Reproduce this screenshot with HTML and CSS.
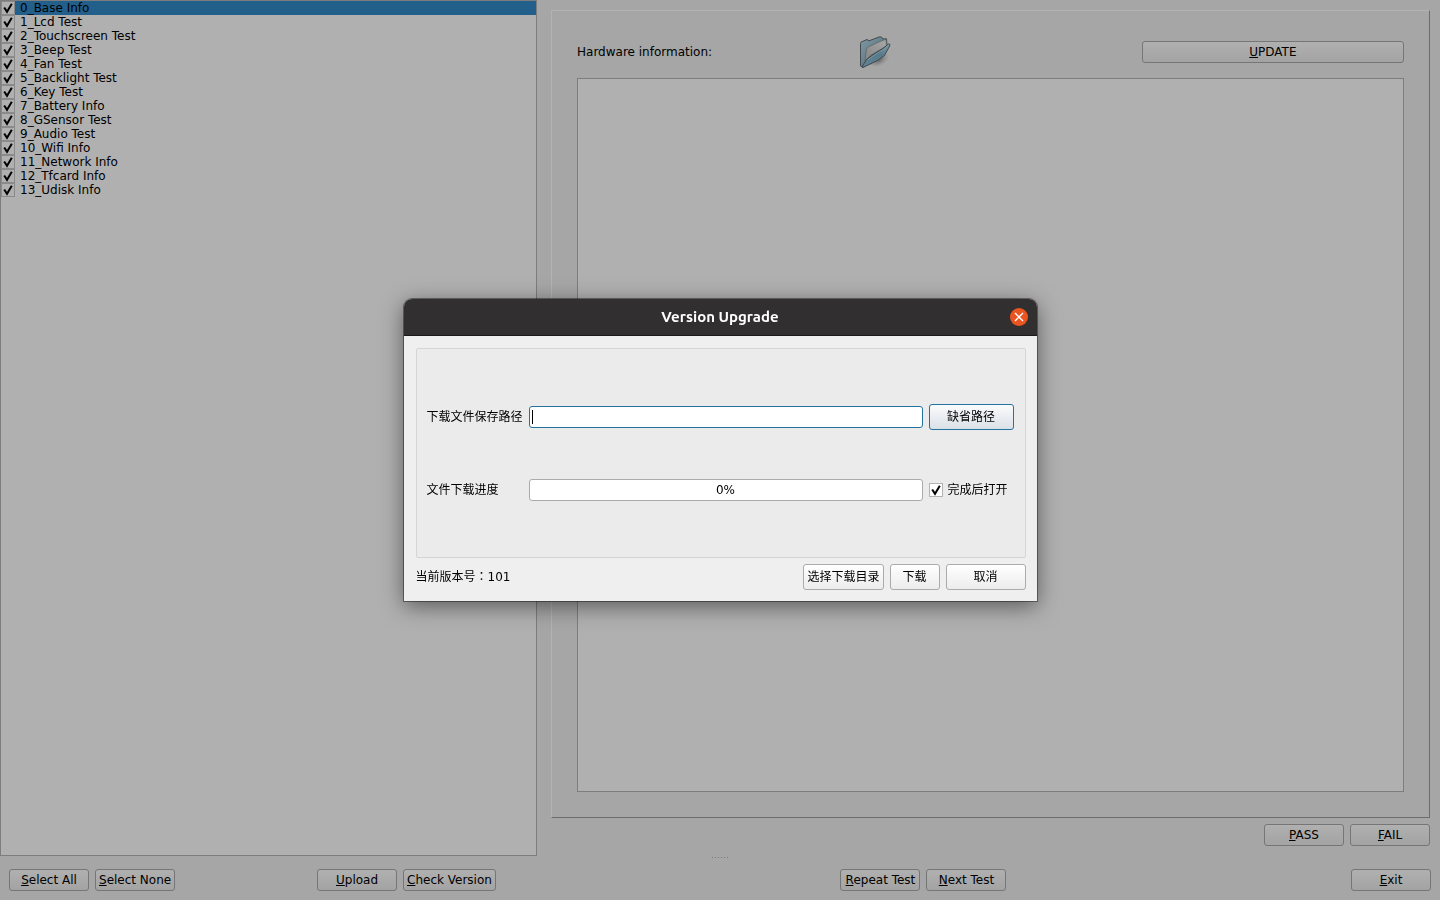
FILE: index.html
```html
<!DOCTYPE html>
<html lang="zh-CN">
<head>
<meta charset="utf-8">
<title>Version Upgrade</title>
<link rel="stylesheet" href="styles.css">
</head>
<body>
<div class="window">
  <main class="workspace">
    <ul class="tests">
      <li class="test selected"><label><input type="checkbox" checked><span>0_Base Info</span></label></li>
      <li class="test"><label><input type="checkbox" checked><span>1_Lcd Test</span></label></li>
      <li class="test"><label><input type="checkbox" checked><span>2_Touchscreen Test</span></label></li>
      <li class="test"><label><input type="checkbox" checked><span>3_Beep Test</span></label></li>
      <li class="test"><label><input type="checkbox" checked><span>4_Fan Test</span></label></li>
      <li class="test"><label><input type="checkbox" checked><span>5_Backlight Test</span></label></li>
      <li class="test"><label><input type="checkbox" checked><span>6_Key Test</span></label></li>
      <li class="test"><label><input type="checkbox" checked><span>7_Battery Info</span></label></li>
      <li class="test"><label><input type="checkbox" checked><span>8_GSensor Test</span></label></li>
      <li class="test"><label><input type="checkbox" checked><span>9_Audio Test</span></label></li>
      <li class="test"><label><input type="checkbox" checked><span>10_Wifi Info</span></label></li>
      <li class="test"><label><input type="checkbox" checked><span>11_Network Info</span></label></li>
      <li class="test"><label><input type="checkbox" checked><span>12_Tfcard Info</span></label></li>
      <li class="test"><label><input type="checkbox" checked><span>13_Udisk Info</span></label></li>
    </ul>
    <section class="detail">
      <div class="panel">
        <div class="panel-head">
          <label for="hardware">Hardware information:</label>
          <svg class="folder" viewBox="0 0 32 32" aria-hidden="true">
            <defs>
              <linearGradient id="back" x1="0" y1="0" x2="1" y2="1"><stop offset="0" stop-color="#7f99a5"/><stop offset="1" stop-color="#4d6470"/></linearGradient>
              <linearGradient id="front" x1="0" y1="1" x2="1" y2="0"><stop offset="0" stop-color="#5f8496"/><stop offset="0.6" stop-color="#587a8b"/><stop offset="1" stop-color="#7d9aa8"/></linearGradient>
              <linearGradient id="paper" x1="0" y1="1" x2="1" y2="0"><stop offset="0" stop-color="#858585"/><stop offset="1" stop-color="#a8a8a8"/></linearGradient>
              <radialGradient id="shade"><stop offset="0" stop-color="#555" stop-opacity=".8"/><stop offset="1" stop-color="#777" stop-opacity="0"/></radialGradient>
            </defs>
            <ellipse cx="20" cy="24" rx="11" ry="6" fill="url(#shade)" transform="rotate(-24 20 24)"/>
            <path d="M1.500 30 1.500 7.500Q1.500 6 3 5.700L8 3.500 10 4.800 20.500 .8 22.500 1 24 3 27.500 2.800 28 10 4 31.500Z" fill="url(#back)" stroke="#43494c"/>
            <path d="M6.500 20 7.500 13 9 11 21 5.500 27 3.300 27.500 10 12 19 6 25Z" fill="url(#paper)" stroke="#5c6062" stroke-width=".7"/>
            <path d="M3 31 5 27.500 8 23 13 19.500 24 12.500 29.500 8Q31.500 7.500 30.700 9.800L25.500 19.500 18.500 24.500 6 30.500Q4 31.700 3 31Z" fill="url(#front)" stroke="#3f474b"/>
            <path d="M8.500 24 13.500 20.300 25 13 29.500 9.200" fill="none" stroke="#8ba1ab" stroke-width=".7"/>
          </svg>
          <button type="button" class="btn dim"><u>U</u>PDATE</button>
        </div>
        <textarea id="hardware" class="output" readonly></textarea>
      </div>
      <div class="verdict">
        <button type="button" class="btn dim"><u>P</u>ASS</button>
        <button type="button" class="btn dim"><u>F</u>AIL</button>
      </div>
    </section>
  </main>
  <div class="splitter"><i></i><i></i><i></i><i></i><i></i><i></i></div>
  <footer class="actions">
    <button type="button" class="btn dim"><u>S</u>elect All</button>
    <button type="button" class="btn dim"><u>S</u>elect None</button>
    <span class="space small"></span>
    <button type="button" class="btn dim"><u>U</u>pload</button>
    <button type="button" class="btn dim"><u>C</u>heck Version</button>
    <span class="space"></span>
    <button type="button" class="btn dim"><u>R</u>epeat Test</button>
    <button type="button" class="btn dim"><u>N</u>ext Test</button>
    <span class="space"></span>
    <button type="button" class="btn dim"><u>E</u>xit</button>
  </footer>
</div>

<div class="overlay">
  <section class="dialog" role="dialog" aria-labelledby="dialog-title">
    <header class="titlebar">
      <h1 id="dialog-title">Version Upgrade</h1>
      <button type="button" class="close" aria-label="Close">
        <svg viewBox="0 0 18 18" aria-hidden="true"><path d="M5 5 13 13M13 5 5 13" stroke="#fff" stroke-width="1.400"/></svg>
      </button>
    </header>
    <div class="dialog-body">
      <div class="fields">
        <label for="path">下载文件保存路径</label>
        <input id="path" class="path" type="text">
        <button type="button" class="btn default">缺省路径</button>
        <span>文件下载进度</span>
        <div class="progress" role="progressbar" aria-label="文件下载进度" aria-valuenow="0" aria-valuemin="0" aria-valuemax="100">0%</div>
        <label class="open-after"><input type="checkbox" checked><span>完成后打开</span></label>
      </div>
      <div class="dialog-foot">
        <span class="version" lang="zh-TW">当前版本号：101</span>
        <button type="button" class="btn">选择下载目录</button>
        <button type="button" class="btn narrow">下载</button>
        <button type="button" class="btn">取消</button>
      </div>
    </div>
  </section>
</div>
</body>
</html>
```

FILE: styles.css
```css
* { box-sizing: border-box; }

body {
  margin: 0;
  background: #a6a6a6;
  color: #000;
  font: 12px/14px "DejaVu Sans", "Noto Sans CJK SC", sans-serif;
}

button, input, textarea { margin: 0; font: inherit; color: inherit; }

u { text-underline-offset: 1px; text-decoration-thickness: 1px; text-decoration-skip-ink: none; }

.window { display: flex; flex-direction: column; min-height: 100vh; }

.workspace {
  flex: 1;
  display: grid;
  grid-template-columns: 537fr 879fr;
  gap: 14px;
  padding-right: 10px;
}

.tests {
  margin: 0;
  padding: 0;
  list-style: none;
  background: #b0b0b0;
  border: 1px solid #7d7d7d;
}

.test label { display: flex; }
.test span { flex: 1; padding-left: 5px; }
.test.selected span { background: #225f8b; }

input[type="checkbox"] {
  appearance: none;
  flex: none;
  width: 14px;
  height: 14px;
  border: 1px solid #b4b4b4;
  background: #fff;
}

input[type="checkbox"]:checked {
  background-image: url("data:image/svg+xml,%3Csvg xmlns='http://www.w3.org/2000/svg' viewBox='0 0 12 12'%3E%3Cpath d='M2.200 5.500 5 9.800 9.800 1.800' fill='none' stroke='%23000' stroke-width='2'/%3E%3C/svg%3E");
  background-size: 100% 100%;
}

.test input[type="checkbox"] { border-color: #8a8a8a; background-color: #b0b0b0; }

.detail { display: flex; flex-direction: column; gap: 6px; padding: 10px 0; }

.panel {
  flex: 1;
  display: flex;
  flex-direction: column;
  gap: 10px;
  padding: 25px;
  border: 1px solid;
  border-color: #b3b3b3 #6c6c6c #6c6c6c #b3b3b3;
}

.panel-head { display: grid; grid-template-columns: 14fr 14fr 13fr; align-items: center; }
.folder { width: 32px; height: 32px; }

.output {
  flex: 1;
  width: 100%;
  resize: none;
  background: #b0b0b0;
  border: 1px solid #7d7d7d;
  outline: none;
}

.verdict { display: flex; justify-content: flex-end; gap: 6px; }

.splitter { display: flex; justify-content: center; gap: 2px; height: 3px; padding: 1px 0; }
.splitter i { width: 1px; background: #7d7d7d; }

.actions { display: flex; padding: 10px 9px 9px; }
.actions .btn + .btn { margin-left: 6px; }
.space { flex: 17; }
.space.small { flex: 7; }

.btn {
  min-width: 80px;
  height: 26px;
  padding: 0 3px;
  border: 1px solid #ababab;
  border-radius: 3px;
  background: linear-gradient(#fff, #ececec);
  white-space: nowrap;
}

.btn.dim { height: 22px; border-color: #767676; background: linear-gradient(#b0b0b0, #a3a3a3); }
.btn.narrow { min-width: 50px; }
.btn.default { border-color: #2472a0; background: linear-gradient(#fafbfc, #dbe1e8); }

.overlay { position: fixed; inset: 0; display: grid; place-items: center; }

.dialog {
  width: 633px;
  max-width: 100%;
  border-radius: 8px 8px 0 0;
  background: #efefef;
  box-shadow: 0 0 0 1px rgba(0, 0, 0, 0.4), 0 5px 22px rgba(0, 0, 0, 0.5);
}

.titlebar {
  display: grid;
  grid-template-columns: 1fr auto 1fr;
  align-items: center;
  height: 37px;
  padding: 0 9px;
  border-radius: 8px 8px 0 0;
  border-bottom: 1px solid #1b1a1a;
  background: #322f30;
}

.titlebar h1 {
  grid-column: 2;
  margin: 0;
  color: #fff;
  font: 700 15px/20px Ubuntu, "Noto Sans", sans-serif;
}

.close {
  justify-self: end;
  width: 18px;
  height: 18px;
  padding: 0;
  border: 0;
  border-radius: 50%;
  background: #e95420;
}

.close svg { display: block; }

.dialog-body { padding: 12px 11px 11px 12px; line-height: 15px; }

.fields {
  display: grid;
  grid-template-columns: auto 1fr 85px;
  grid-auto-rows: 26px;
  gap: 47px 6px;
  align-items: center;
  padding: 55px 11px 54px 10px;
  border: 1px solid #d5d5d5;
  border-radius: 2px;
  background: #ebebeb;
}

.path, .progress { width: 100%; height: 22px; border-radius: 3px; background: #fff; }

.path {
  padding: 0 3px;
  border: 1px solid #2472a0;
  outline: none;
  background: linear-gradient(#000, #000) 2px 3px / 1px 14px no-repeat #fff;
}

.progress { border: 1px solid #ababab; line-height: 20px; text-align: center; }

.open-after { display: flex; align-items: center; gap: 5px; }

.dialog-foot { display: flex; align-items: center; gap: 6px; margin-top: 6px; }
.version { flex: 1; font-family: "DejaVu Sans", "Noto Sans CJK TC", sans-serif; }
```
